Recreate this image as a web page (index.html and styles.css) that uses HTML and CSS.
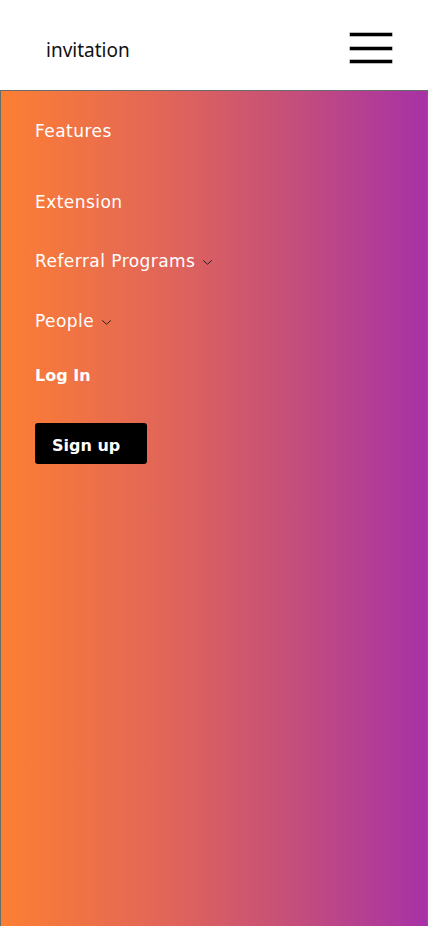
FILE: index.html
```html
<!DOCTYPE html>
<html>
<head>
<meta charset="utf-8">
<link rel="stylesheet" href="styles.css">
</head>
<body>
<header class="topbar">
  <span class="brand">invitation</span>
  <button class="burger" aria-label="menu">
    <span></span><span></span><span></span>
  </button>
</header>
<nav class="menu">
  <a class="item features">Features</a>
  <a class="item extension">Extension</a>
  <a class="item referral">Referral Programs <svg class="chev" viewBox="0 0 12 8" width="11" height="7"><path d="M1 1.5 L6 6 L11 1.5" fill="none" stroke="#222" stroke-width="1.1"/></svg></a>
  <a class="item people">People <svg class="chev" viewBox="0 0 12 8" width="11" height="7"><path d="M1 1.5 L6 6 L11 1.5" fill="none" stroke="#222" stroke-width="1.1"/></svg></a>
  <a class="item login">Log In</a>
  <div class="signup-wrap"><button class="signup">Sign up</button></div>
</nav>
</body>
</html>
```
FILE: styles.css
```css
html, body {
  margin: 0;
  padding: 0;
  height: 100%;
}
body {
  font-family: "DejaVu Sans", "Liberation Sans", sans-serif;
  background: #fff;
  display: flex;
  flex-direction: column;
}
.topbar {
  height: 90px;
  box-sizing: border-box;
  display: flex;
  align-items: center;
  justify-content: space-between;
  padding: 0 36px 0 46px;
}
.brand {
  font-family: "Noto Sans", "Liberation Sans", sans-serif;
  font-size: 19px;
  color: #111;
  margin-top: 10px;
}
.burger {
  width: 42px;
  height: 30px;
  padding: 0;
  border: 0;
  background: none;
  display: flex;
  flex-direction: column;
  justify-content: space-between;
  margin-top: 6px;
}
.burger span {
  display: block;
  height: 3px;
  background: #000;
  box-shadow: 0 0 0 0.5px #777;
}
.menu {
  flex: 1;
  border: 1px solid #6b6b6b;
  border-bottom: 0;
  background: linear-gradient(90deg, #fd7f33 0%, #e0645a 40%, #c34d7c 70%, #a731a6 100%);
  display: flex;
  flex-direction: column;
  align-items: flex-start;
  padding: 27px 0 0 34px;
}
.item {
  color: #fff;
  font-size: 17px;
  letter-spacing: 0.45px;
  line-height: 26px;
  display: flex;
  align-items: center;
  gap: 7px;
}
.features { margin-bottom: 45px; }
.extension { margin-bottom: 33px; }
.referral { margin-bottom: 34px; }
.people { margin-bottom: 29px; }
.chev { margin-top: 2px; }
.login {
  font-size: 16px;
  letter-spacing: 0;
  font-weight: 700;
  margin-bottom: 34px;
}
.signup {
  width: 112px;
  height: 41px;
  background: #000;
  color: #fff;
  border: 0;
  border-radius: 3px;
  font-family: "DejaVu Sans", "Liberation Sans", sans-serif;
  font-weight: 700;
  font-size: 16px;
  padding: 4px 0 0 17px;
  text-align: left;
}
```
